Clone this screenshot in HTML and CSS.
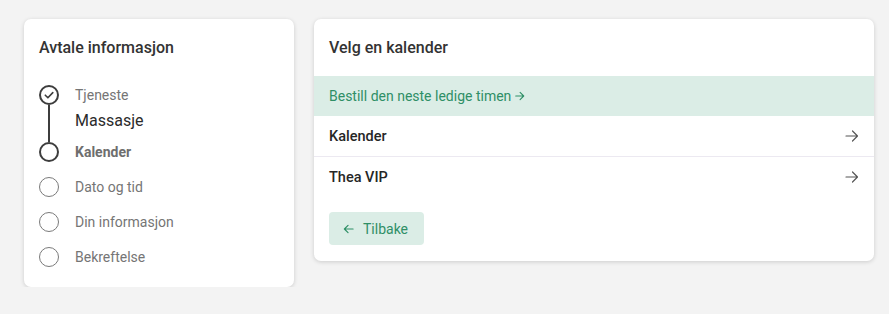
FILE: index.html
```html
<!DOCTYPE html>
<html lang="no">
<head>
<meta charset="utf-8">
<title>Avtale</title>
<link rel="stylesheet" href="styles.css">
</head>
<body>
<div class="page">
  <aside class="card info">
    <h2 class="card-title">Avtale informasjon</h2>
    <ol class="steps">
      <li class="step done">
        <div class="indicator">
          <span class="dot dot-done">
            <svg viewBox="0 0 20 20" width="20" height="20"><circle cx="10" cy="10" r="9" fill="none" stroke="#3d3d3d" stroke-width="2"/><path d="M6.3 10.2 L8.9 12.8 L13.8 7.6" fill="none" stroke="#3d3d3d" stroke-width="1.6" stroke-linecap="round" stroke-linejoin="round"/></svg>
          </span>
          <span class="line"></span>
        </div>
        <div class="step-body">
          <div class="step-label">Tjeneste</div>
          <div class="step-value">Massasje</div>
        </div>
      </li>
      <li class="step current">
        <div class="indicator"><span class="dot dot-current"></span></div>
        <div class="step-body"><div class="step-label">Kalender</div></div>
      </li>
      <li class="step">
        <div class="indicator"><span class="dot"></span></div>
        <div class="step-body"><div class="step-label">Dato og tid</div></div>
      </li>
      <li class="step">
        <div class="indicator"><span class="dot"></span></div>
        <div class="step-body"><div class="step-label">Din informasjon</div></div>
      </li>
      <li class="step">
        <div class="indicator"><span class="dot"></span></div>
        <div class="step-body"><div class="step-label">Bekreftelse</div></div>
      </li>
    </ol>
  </aside>

  <section class="card main">
    <h2 class="card-title main-title">Velg en kalender</h2>
    <a class="next-free" href="#">Bestill den neste ledige timen <svg class="small-arrow" viewBox="0 0 11 10" width="10" height="10"><path d="M0.8 5 H9.6 M5.6 1 L9.6 5 L5.6 9" fill="none" stroke="#2f8f66" stroke-width="1.2" stroke-linecap="round" stroke-linejoin="round"/></svg></a>
    <ul class="list">
      <li class="list-row">
        <span>Kalender</span>
        <svg class="row-arrow" viewBox="0 0 14 12" width="14" height="12"><path d="M1 6 H12.5 M7.5 1 L12.5 6 L7.5 11" fill="none" stroke="#555" stroke-width="1.2" stroke-linecap="round" stroke-linejoin="round"/></svg>
      </li>
      <li class="list-row">
        <span>Thea VIP</span>
        <svg class="row-arrow" viewBox="0 0 14 12" width="14" height="12"><path d="M1 6 H12.5 M7.5 1 L12.5 6 L7.5 11" fill="none" stroke="#555" stroke-width="1.2" stroke-linecap="round" stroke-linejoin="round"/></svg>
      </li>
    </ul>
    <div class="actions">
      <button class="back-btn" type="button">
        <svg viewBox="0 0 12 10" width="11" height="10"><path d="M11 5 H1.5 M5.5 1 L1.5 5 L5.5 9" fill="none" stroke="#2f8f66" stroke-width="1.3" stroke-linecap="round" stroke-linejoin="round"/></svg>
        <span>Tilbake</span>
      </button>
    </div>
  </section>
</div>
</body>
</html>
```

FILE: styles.css
```css
* { box-sizing: border-box; }

html, body {
  margin: 0;
  padding: 0;
  background: #f3f3f3;
  font-family: Roboto, "Liberation Sans", Arial, sans-serif;
  color: #333;
}

.page {
  display: flex;
  align-items: flex-start;
  gap: 20px;
  padding: 19px 15px 0 24px;
}

.card {
  background: #fff;
  border-radius: 7px;
  box-shadow: 0 1px 4px rgba(0, 0, 0, 0.16);
}

.card-title {
  margin: 0;
  font-size: 16px;
  font-weight: 500;
  line-height: 21px;
  color: #333;
}

/* Left card */
.info {
  width: 270px;
  padding: 18px 15px 20px 15px;
}

.steps {
  list-style: none;
  margin: 27px 0 0 0;
  padding: 0;
}

.step {
  display: flex;
  gap: 16px;
  margin-bottom: 15px;
}

.step:last-child { margin-bottom: 0; }

.step.done { margin-bottom: 0; }

.indicator {
  width: 20px;
  display: flex;
  flex-direction: column;
  align-items: center;
  flex: none;
}

.dot {
  width: 20px;
  height: 20px;
  border-radius: 50%;
  border: 1px solid #7a7a7a;
  display: block;
  flex: none;
}

.dot-done {
  border: none;
}

.dot-done svg { display: block; }

.dot-current {
  border: 2px solid #3d3d3d;
}

.line {
  flex: 1;
  width: 2px;
  background: #3d3d3d;
}

.step.done .step-body { padding-bottom: 10px; }

.step-label {
  font-size: 14px;
  line-height: 20px;
  color: #757575;
}

.step.current .step-label {
  font-weight: 700;
  color: #6e6e6e;
}

.step-value {
  font-size: 16px;
  line-height: 22px;
  color: #2b2b2b;
  margin-top: 5px;
}

/* Right card */
.main {
  flex: 1;
  padding-bottom: 16px;
  overflow: hidden;
}

.main-title {
  padding: 18px 15px;
}

.next-free {
  display: flex;
  align-items: center;
  height: 40px;
  padding: 0 15px;
  background: #dbede6;
  color: #2f8f66;
  font-size: 14px;
  text-decoration: none;
}

.small-arrow {
  display: block;
  margin-left: 4px;
}

.list {
  list-style: none;
  margin: 0;
  padding: 0;
}

.list-row {
  display: flex;
  align-items: center;
  justify-content: space-between;
  height: 40px;
  padding: 0 15px;
  font-size: 14.5px;
  font-weight: 500;
  color: #262626;
}

.list-row + .list-row {
  border-top: 1px solid #ece9f1;
  height: 41px;
}

.row-arrow { display: block; }

.actions {
  padding: 15px 15px 0 15px;
}

.back-btn {
  display: inline-flex;
  align-items: center;
  gap: 9px;
  height: 33px;
  padding: 0 16px 0 14px;
  border: none;
  border-radius: 4px;
  background: #dbede6;
  color: #2f8f66;
  font-family: inherit;
  font-size: 14px;
  cursor: pointer;
}

.back-btn svg { display: block; }
```
